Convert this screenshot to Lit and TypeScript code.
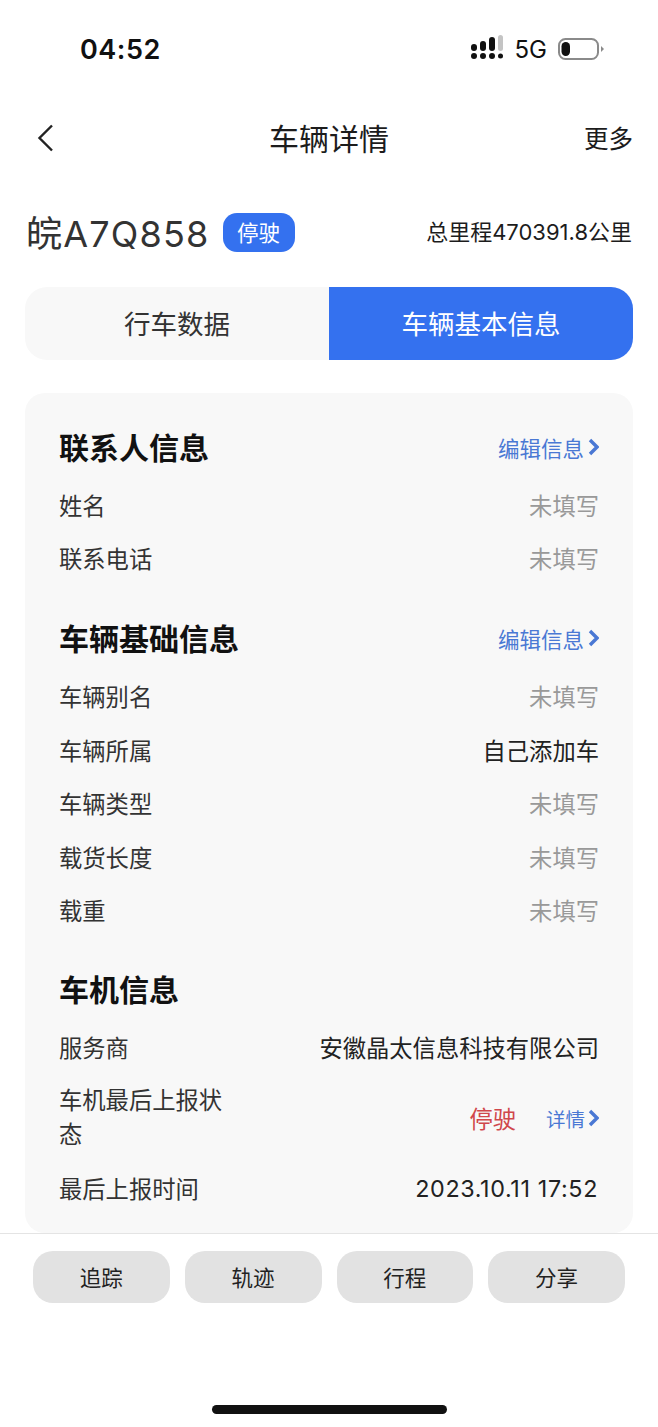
import { LitElement, html, css, svg } from 'lit';
import { customElement } from 'lit/decorators.js';

const chevron = svg`<svg class="chev" width="11" height="18" viewBox="0 0 11 18"><path d="M2 2l7 7-7 7" fill="none" stroke="currentColor" stroke-width="3.4"/></svg>`;

@customElement('app-root')
export class AppRoot extends LitElement {
  static styles = css`
    :host {
      display: block;
      width: 658px;
      height: 1427px;
      background: #fff;
      color: #1c1c1c;
      font-family: 'Inter', 'Noto Sans CJK SC', sans-serif;
      overflow: hidden;
    }
    .status {
      height: 96px;
      display: flex;
      align-items: center;
      justify-content: space-between;
      padding: 2px 54px 0 80px;
      box-sizing: border-box;
    }
    .time {
      font-size: 27px;
      font-weight: 600;
      color: #111;
      letter-spacing: 0.5px;
    }
    .status-right {
      display: flex;
      align-items: center;
      gap: 12px;
      font-size: 24px;
      color: #111;
    }
    .signal {
      display: block;
    }
    .battery {
      display: block;
      margin-left: -1px;
    }
    .nav {
      height: 82px;
      display: grid;
      grid-template-columns: 1fr auto 1fr;
      align-items: center;
      padding: 0 25px;
    }
    .back {
      margin: 2px 0 0 12px;
      display: block;
    }
    .nav-title {
      font-size: 30px;
    }
    .more {
      justify-self: end;
      font-size: 24.5px;
    }
    .plate-row {
      margin-top: 20px;
      height: 68px;
      padding: 0 26px;
      display: flex;
      align-items: center;
    }
    .plate {
      font-size: 36px;
      color: #333;
      letter-spacing: 1.2px;
      padding-bottom: 2px;
    }
    .badge {
      margin-left: 13px;
      width: 72px;
      height: 39px;
      padding-bottom: 2px;
      box-sizing: border-box;
      border-radius: 14px;
      background: #3471ef;
      color: #fff;
      font-size: 21.5px;
      display: flex;
      align-items: center;
      justify-content: center;
    }
    .mileage {
      margin-left: auto;
      font-size: 22px;
      padding-bottom: 4px;
    }
    .tabs {
      margin: 21px 25px 0;
      height: 73px;
      display: grid;
      grid-template-columns: 1fr 1fr;
      border-radius: 22px;
      background: #f8f8f8;
      overflow: hidden;
    }
    .tab {
      display: flex;
      align-items: center;
      justify-content: center;
      padding-bottom: 3px;
      box-sizing: border-box;
      font-size: 26.5px;
      color: #333;
    }
    .tab.on {
      background: #3471ef;
      color: #fff;
    }
    .card {
      margin: 33px 25px 0;
      height: 840px;
      padding: 35px 34px 0;
      box-sizing: border-box;
      background: #f8f8f8;
      border-radius: 20px;
    }
    .section + .section {
      margin-top: 33px;
    }
    .section.second {
      margin-top: 34px;
    }
    .head {
      height: 36px;
      margin-bottom: 14px;
      display: flex;
      align-items: center;
      justify-content: space-between;
    }
    .head h2 {
      margin: 0;
      font-size: 30px;
      font-weight: 700;
      color: #111;
    }
    .link {
      display: flex;
      align-items: center;
      gap: 4px;
      color: #4a78d4;
      font-size: 21.5px;
      padding-top: 2px;
    }
    .link.small {
      font-size: 19.5px;
      gap: 3px;
      padding-top: 0;
    }
    .chev {
      display: block;
    }
    .row {
      min-height: 53.6px;
      display: flex;
      align-items: center;
      justify-content: space-between;
      font-size: 23.3px;
      color: #333;
    }
    .row .value {
      color: #222;
    }
    .row .empty {
      color: #999;
    }
    .row .date {
      color: #222;
      letter-spacing: 0.65px;
      margin-right: 1px;
      padding-top: 2px;
    }
    .row .label-wrap {
      width: 175px;
      line-height: 34.5px;
      padding: 10px 0 8px;
    }
    .report {
      display: flex;
      align-items: center;
      gap: 30px;
      padding-top: 2px;
    }
    .stop {
      color: #d0474b;
    }
    .footer {
      border-top: 1px solid #e4e4e4;
      padding: 17px 33px 0;
      display: grid;
      grid-template-columns: repeat(4, 1fr);
      gap: 15px;
    }
    .btn {
      height: 52px;
      padding-bottom: 2px;
      box-sizing: border-box;
      border-radius: 20px;
      background: #e2e2e2;
      display: flex;
      align-items: center;
      justify-content: center;
      font-size: 21.5px;
      color: #222;
    }
    .home {
      width: 235px;
      height: 9px;
      margin: 102px auto 0;
      border-radius: 5px;
      background: #111;
    }
  `;

  private row(label: string, value: string, cls = value === '未填写' ? 'empty' : 'value') {
    return html`<div class="row">
      <span>${label}</span>
      <span class=${cls}>${value}</span>
    </div>`;
  }

  private signal() {
    return html`<svg class="signal" width="32" height="28" viewBox="0 0 32 28">
      <g fill="#111">
        <circle cx="3" cy="21" r="3" /><circle cx="12" cy="21" r="3" /><circle cx="21" cy="21" r="3" /><circle cx="29.5" cy="21" r="2.5" />
        <rect x="0" y="9" width="6" height="7" rx="3" />
        <rect x="9" y="6" width="6" height="10" rx="3" />
        <rect x="18" y="2" width="6" height="14" rx="3" />
      </g>
      <rect x="27" y="0" width="5" height="16" rx="2.5" fill="#c4c4c4" />
    </svg>`;
  }

  private battery() {
    return html`<svg class="battery" width="46" height="22" viewBox="0 0 46 22">
      <rect x="1" y="1" width="39" height="20" rx="6.5" fill="#fff" stroke="#8a8a8a" stroke-width="2" />
      <rect x="3.5" y="4" width="8.5" height="14" rx="4.2" fill="#111" />
      <path d="M43 8l3 3-3 3z" fill="#8a8a8a" />
    </svg>`;
  }

  render() {
    return html`
      <div class="status">
        <span class="time">04:52</span>
        <div class="status-right">${this.signal()}<span>5G</span>${this.battery()}</div>
      </div>
      <div class="nav">
        <svg class="back" width="18" height="28" viewBox="0 0 18 28">
          <path d="M15 1.5L2.5 14 15 26.5" fill="none" stroke="#222" stroke-width="2.4" />
        </svg>
        <span class="nav-title">车辆详情</span>
        <span class="more">更多</span>
      </div>
      <div class="plate-row">
        <span class="plate">皖A7Q858</span>
        <span class="badge">停驶</span>
        <span class="mileage">总里程470391.8公里</span>
      </div>
      <div class="tabs">
        <div class="tab">行车数据</div>
        <div class="tab on">车辆基本信息</div>
      </div>
      <div class="card">
        <div class="section">
          <div class="head"><h2>联系人信息</h2><span class="link">编辑信息${chevron}</span></div>
          ${this.row('姓名', '未填写')}
          ${this.row('联系电话', '未填写')}
        </div>
        <div class="section second">
          <div class="head"><h2>车辆基础信息</h2><span class="link">编辑信息${chevron}</span></div>
          ${this.row('车辆别名', '未填写')}
          ${this.row('车辆所属', '自己添加车')}
          ${this.row('车辆类型', '未填写')}
          ${this.row('载货长度', '未填写')}
          ${this.row('载重', '未填写')}
        </div>
        <div class="section">
          <div class="head"><h2>车机信息</h2></div>
          ${this.row('服务商', '安徽晶太信息科技有限公司')}
          <div class="row">
            <span class="label-wrap">车机最后上报状态</span>
            <span class="report">
              <span class="stop">停驶</span>
              <span class="link small">详情${chevron}</span>
            </span>
          </div>
          ${this.row('最后上报时间', '2023.10.11 17:52', 'date')}
        </div>
      </div>
      <div class="footer">
        <div class="btn">追踪</div>
        <div class="btn">轨迹</div>
        <div class="btn">行程</div>
        <div class="btn">分享</div>
      </div>
      <div class="home"></div>
    `;
  }
}
